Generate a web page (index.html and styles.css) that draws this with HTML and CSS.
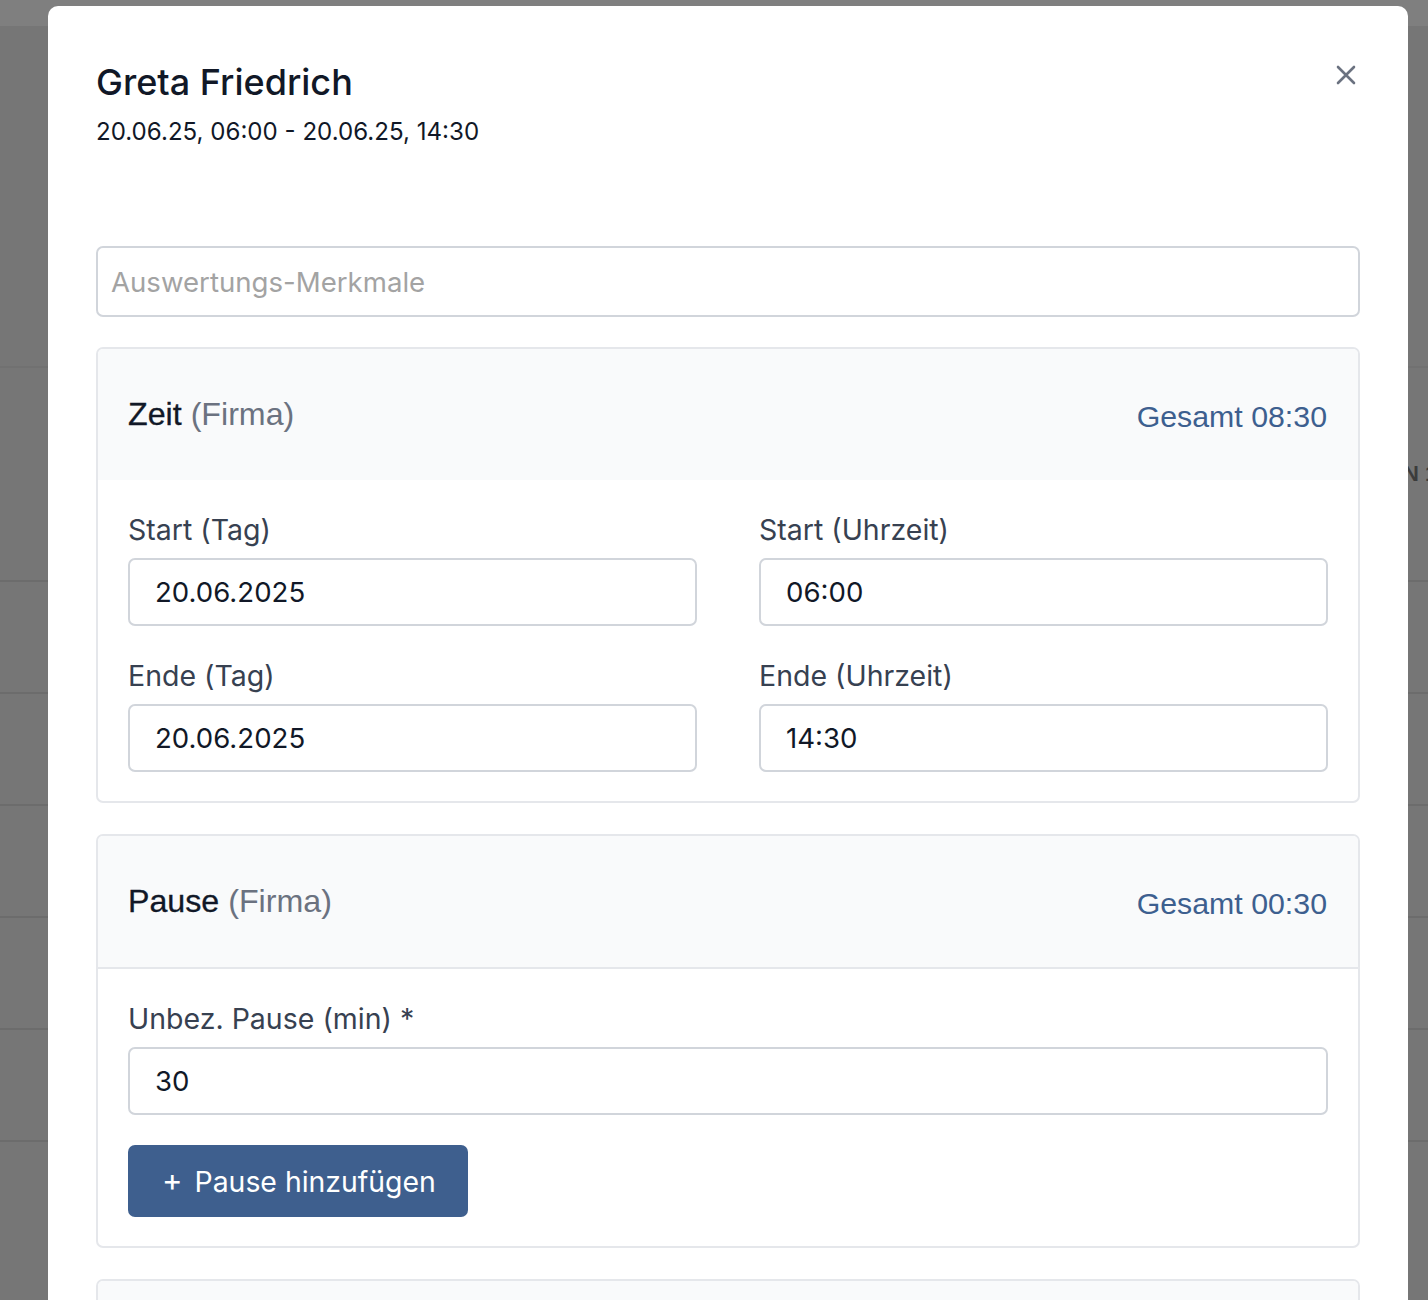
FILE: index.html
```html
<!DOCTYPE html>
<html lang="de">
<head>
<meta charset="utf-8">
<title>Greta Friedrich</title>
<link rel="stylesheet" href="styles.css">
</head>
<body>
<div class="page">
  <div class="page-top"></div>
  <div class="page-gap"></div>
  <div class="page-row page-row-first"><span class="page-cell">N 1</span></div>
  <div class="page-row"></div>
  <div class="page-row"></div>
  <div class="page-row"></div>
  <div class="page-row"></div>
  <div class="page-row"></div>
  <div class="page-row"></div>
</div>

<div class="modal">
  <div class="modal-head">
    <div>
      <h1 class="title">Greta Friedrich</h1>
      <div class="subtitle">20.06.25, 06:00 - 20.06.25, 14:30</div>
    </div>
    <button class="close" aria-label="Schließen">
      <svg width="20" height="20" viewBox="0 0 20 20"><path d="M2 2 L18 18 M18 2 L2 18" stroke="#6b7280" stroke-width="2.6" stroke-linecap="round" fill="none"/></svg>
    </button>
  </div>

  <input class="tags" type="text" placeholder="Auswertungs-Merkmale">

  <section class="card card-first">
    <div class="card-head">
      <div class="card-title"><span class="strong">Zeit</span> <span class="muted">(Firma)</span></div>
      <div class="total">Gesamt 08:30</div>
    </div>
    <div class="card-body grid2">
      <label class="field"><span class="label">Start (Tag)</span><input class="input" value="20.06.2025"></label>
      <label class="field"><span class="label">Start (Uhrzeit)</span><input class="input" value="06:00"></label>
      <label class="field"><span class="label">Ende (Tag)</span><input class="input" value="20.06.2025"></label>
      <label class="field"><span class="label">Ende (Uhrzeit)</span><input class="input" value="14:30"></label>
    </div>
  </section>

  <section class="card">
    <div class="card-head card-head-line">
      <div class="card-title"><span class="strong">Pause</span> <span class="muted">(Firma)</span></div>
      <div class="total">Gesamt 00:30</div>
    </div>
    <div class="card-body">
      <label class="field"><span class="label">Unbez. Pause (min) *</span><input class="input" value="30"></label>
      <button class="btn"><span class="plus">+</span>Pause hinzufügen</button>
    </div>
  </section>

  <section class="card card-next">
    <div class="card-head"></div>
  </section>
</div>
</body>
</html>
```

FILE: styles.css
```css
* { box-sizing: border-box; }
html, body { margin: 0; padding: 0; height: 1300px; overflow: hidden; }
body { background: #767676; font-family: Inter, "Noto Sans", sans-serif; position: relative; }

.page { display: flex; flex-direction: column; }
.page-top { height: 26px; background: #7f7f7f; }
.page-gap { height: 340px; }
.page-row { height: 112px; border-top: 2px solid #6c6c6c; display: flex; align-items: center; }
.page-row-first { height: 214px; border-top-color: #717171; }
.page-cell { margin-left: 1403px; font: bold 22px "Liberation Sans", Arial, sans-serif; color: #3c3c3c; white-space: nowrap; }

.modal {
  position: absolute; left: 48px; top: 6px; width: 1360px;
  background: #fff; border-radius: 10px;
  padding: 56px 48px 200px 48px;
  display: flex; flex-direction: column;
}
.modal > * { flex-shrink: 0; }
.modal-head { display: flex; justify-content: space-between; align-items: flex-start; height: 184px; }
.title { margin: 0; font-size: 36px; font-weight: 500; color: #111827; line-height: 40px; }
.subtitle { margin-top: 15px; font-size: 24.1px; color: #111827; line-height: 30px; }
.close { background: none; border: 0; padding: 0; margin: 3px 4px 0 0; width: 20px; height: 20px; }

.tags {
  width: 100%; height: 71px; border: 2px solid #d1d5db; border-radius: 7px;
  padding: 0 13px; font: 27.6px Inter, sans-serif; color: #111827; outline: none;
}
.tags::placeholder { color: #a3a3a3; }

.card { margin-top: 31px; border: 2px solid #e5e7eb; border-radius: 7px; overflow: hidden; }
.card-first { margin-top: 30px; }
.card-head {
  background: #f9fafb; height: 131px; padding: 0 31px 0 30px;
  display: flex; justify-content: space-between; align-items: center;
}
.card-head-line { border-bottom: 2px solid #e5e7eb; height: 133px; }
.card-title { font: 32.2px "Liberation Sans", Arial, sans-serif; color: #6b7280; }
.strong { color: #111827; -webkit-text-stroke: 0.3px #111827; }
.muted { color: #6b7280; }
.total { font: 30.3px "Liberation Sans", Arial, sans-serif; color: #3d5f8f; padding-top: 4px; }

.card-body { padding: 32px 30px 29px 30px; display: flex; flex-direction: column; gap: 30px; }
.grid2 { display: grid; grid-template-columns: 1fr 1fr; column-gap: 62px; row-gap: 32px; }

.field { display: flex; flex-direction: column; gap: 10px; }
.label { font-size: 28.5px; color: #374151; line-height: 36px; }
.input {
  width: 100%; height: 68px; border: 2px solid #d1d5db; border-radius: 7px;
  padding: 0 25px; font: 27.6px Inter, sans-serif; color: #111827; background: #fff; outline: none;
}

.btn {
  align-self: flex-start; height: 72px; padding: 0 32px 0 34px;
  background: #3e5f8e; color: #fff; border: 0; border-radius: 7px;
  font: 28.4px Inter, sans-serif; display: flex; align-items: center;
}
.plus { font-size: 31px; margin-right: 12px; line-height: 1; position: relative; top: -2px; }
```
